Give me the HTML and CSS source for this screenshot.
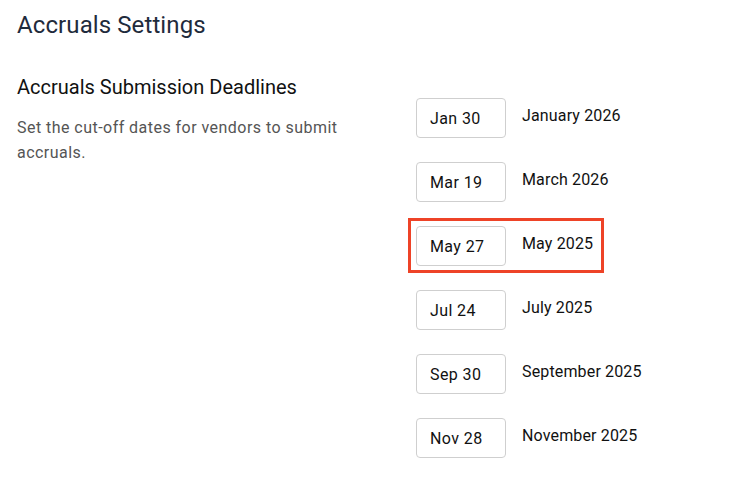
FILE: index.html
```html
<!DOCTYPE html>
<html>
<head>
<meta charset="utf-8">
<link rel="stylesheet" href="styles.css">
</head>
<body>
<div class="page">
  <h1 class="title">Accruals Settings</h1>
  <section class="section">
    <div class="intro">
      <h2 class="section-title">Accruals Submission Deadlines</h2>
      <p class="section-desc">Set the cut-off dates for vendors to submit accruals.</p>
    </div>
    <div class="deadlines">
      <div class="row"><input class="date" type="text" value="Jan 30"><span class="month">January 2026</span></div>
      <div class="row"><input class="date" type="text" value="Mar 19"><span class="month">March 2026</span></div>
      <div class="row row-marked"><input class="date" type="text" value="May 27"><span class="month">May 2025</span><span class="highlight"></span></div>
      <div class="row"><input class="date" type="text" value="Jul 24"><span class="month">July 2025</span></div>
      <div class="row"><input class="date" type="text" value="Sep 30"><span class="month">September 2025</span></div>
      <div class="row"><input class="date" type="text" value="Nov 28"><span class="month">November 2025</span></div>
    </div>
  </section>
</div>
</body>
</html>
```

FILE: styles.css
```css
* { box-sizing: border-box; }
html, body { margin: 0; padding: 0; background: #fff; }
body { font-family: Roboto, "Noto Sans", Arial, sans-serif; color: #111; }
.page { padding: 9px 17px 0 17px; }
.title {
  margin: 0;
  font-size: 24px;
  line-height: 32px;
  font-weight: 400;
  letter-spacing: 0.1px;
  color: #1f2b3c;
}
.section {
  margin-top: 32px;
  display: grid;
  grid-template-columns: 359px 1fr;
  column-gap: 40px;
}
.section-title {
  margin: 0;
  font-size: 20px;
  line-height: 28px;
  font-weight: 400;
  color: #111;
}
.section-desc {
  margin: 14px 0 0 0;
  font-size: 16px;
  line-height: 25px;
  letter-spacing: 0.46px;
  color: #555;
  max-width: 350px;
}
.deadlines {
  padding-top: 25px;
  display: flex;
  flex-direction: column;
  gap: 24px;
}
.row {
  position: relative;
  display: flex;
  align-items: flex-start;
  gap: 16px;
}
.date {
  width: 90px;
  height: 40px;
  border: 1px solid #cfcfcf;
  border-radius: 4px;
  padding: 0 13px;
  font-family: Roboto, "Noto Sans", Arial, sans-serif;
  font-size: 16px;
  letter-spacing: 0.4px;
  color: #111;
  background: #fff;
  outline: none;
}
.month {
  padding-top: 6px;
  font-size: 16px;
  line-height: 24px;
  letter-spacing: 0.15px;
  color: #111;
}
.highlight {
  position: absolute;
  left: -8px;
  top: -8px;
  width: 196px;
  height: 55px;
  border: 3px solid #ee4327;
  pointer-events: none;
}
```
